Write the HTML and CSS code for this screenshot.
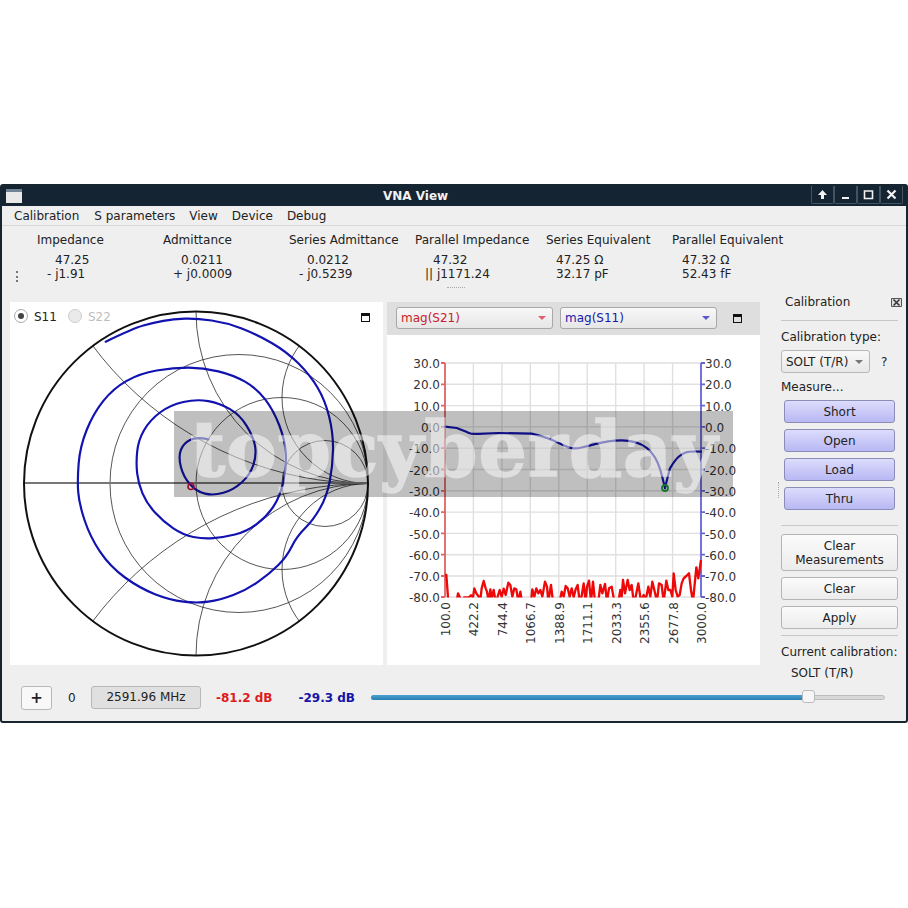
FILE: index.html
```html
<!DOCTYPE html>
<html lang="en">
<head>
<meta charset="utf-8">
<title>VNA View</title>
<link rel="stylesheet" href="styles.css">
</head>
<body>
<div class="window">
  <div class="titlebar">
    <div class="app-icon"></div>
    <div class="title">VNA View</div>
    <div class="wm-buttons">
      <div class="wm-btn"><svg width="11" height="11" viewBox="0 0 11 11"><path class="wm-fill" d="M5.5 1 10 6H7v4H4V6H1z"/></svg></div>
      <div class="wm-btn"><svg width="11" height="11" viewBox="0 0 11 11"><rect class="wm-fill" x="2" y="8" width="7" height="2"/></svg></div>
      <div class="wm-btn"><svg width="11" height="11" viewBox="0 0 11 11"><path class="wm-line" d="M1.5 2h8v7.5h-8z"/></svg></div>
      <div class="wm-btn"><svg width="11" height="11" viewBox="0 0 11 11"><path class="wm-x" d="M1.5 1.5l8 8M9.5 1.5l-8 8"/></svg></div>
    </div>
  </div>
  <div class="menubar">
    <span>Calibration</span><span>S parameters</span><span>View</span><span>Device</span><span>Debug</span>
  </div>
  <div class="info">
    <div class="grip-v"></div>
    <div class="col c1"><div class="lbl">Impedance</div><div class="re">47.25</div><div class="im">- j1.91</div></div>
    <div class="col c1"><div class="lbl">Admittance</div><div class="re">0.0211</div><div class="im">+ j0.0009</div></div>
    <div class="col c1"><div class="lbl">Series Admittance</div><div class="re">0.0212</div><div class="im">- j0.5239</div></div>
    <div class="col c2"><div class="lbl">Parallel Impedance</div><div class="re">47.32</div><div class="im">|| j1171.24</div></div>
    <div class="col c1"><div class="lbl">Series Equivalent</div><div class="im">47.25 Ω</div><div class="im">32.17 pF</div></div>
    <div class="col"><div class="lbl">Parallel Equivalent</div><div class="im">47.32 Ω</div><div class="im">52.43 fF</div></div>
    <div class="grip-h"></div>
  </div>
  <div class="workspace">
    <div class="left">
      <div class="charts">
        <div class="panel smith">
          <div class="legend">
            <span class="radio on"></span><span class="leg-text">S11</span>
            <span class="radio off"></span><span class="leg-text dim">S22</span>
          </div>
          <div class="max-icon smith-max"></div>
          <svg class="chart" width="373" height="363" viewBox="10 302 373 363">
            <defs><clipPath id="sc"><circle cx="196" cy="483.5" r="172"/></clipPath></defs>
            <g clip-path="url(#sc)" class="grid-smith">
              <circle cx="239" cy="483.5" r="129"/>
              <circle cx="282" cy="483.5" r="86"/>
              <circle cx="325" cy="483.5" r="43"/>
              <circle cx="368" cy="139.5" r="344"/>
              <circle cx="368" cy="827.5" r="344"/>
              <circle cx="368" cy="311.5" r="172"/>
              <circle cx="368" cy="655.5" r="172"/>
              <circle cx="368" cy="397.5" r="86"/>
              <circle cx="368" cy="569.5" r="86"/>
            </g>
            <line class="smith-axis" x1="24" y1="483" x2="368" y2="483"/>
            <circle class="smith-outer" cx="196" cy="483.5" r="172"/>
            <g transform="translate(0 300) scale(.33333)">
              <path class="trace-smith" d="M317 125Q400 85 430 76.5Q460 68 490 62.5Q520 57 555 56Q590 55 635 61.5Q680 68 725 85.5Q770 103 815 129Q860 155 895 190Q930 225 952.5 262.5Q975 300 987.5 350Q1000 400 999 450Q998 500 989 545Q980 590 960 625Q940 660 915 685Q890 710 875 740Q860 770 835 795Q810 820 775 845Q740 870 700 885Q660 900 625 905Q590 910 550 905Q510 900 465 882.5Q420 865 375 832.5Q330 800 300 755Q270 710 253.5 660Q237 610 234.5 575Q232 540 236 490Q240 440 260 390Q280 340 310 302.5Q340 265 380 242.5Q420 220 470 211.5Q520 203 565 203Q610 203 655 214Q700 225 735 245Q770 265 795 297.5Q820 330 837.5 375Q855 420 857.5 460Q860 500 850 545Q840 590 820 620Q800 650 770 672.5Q740 695 705 703.5Q670 712 640 714.5Q610 717 580 711Q550 705 520 685Q490 665 465 637.5Q440 610 427.5 580Q415 550 411.5 520Q408 490 411.5 455Q415 420 432.5 390Q450 360 480 337.5Q510 315 550 306Q590 297 625 303.5Q660 310 690 327.5Q720 345 740 377.5Q760 410 765 437.5Q770 465 760 495Q750 525 725 547.5Q700 570 670 578.5Q640 587 615 581Q590 575 570 552.5Q550 530 542.5 500Q535 470 542.5 450Q550 430 570 420Q590 410 625 418"/>
            </g>
            <circle class="mark-red" cx="191" cy="486.5" r="3"/>
          </svg>
        </div>
        <div class="panel plot">
          <div class="plot-head">
            <div class="combo red-c"><span>mag(S21)</span><i class="tri tri-red"></i></div>
            <div class="combo blue-c"><span>mag(S11)</span><i class="tri tri-blue"></i></div>
            <div class="max-icon"></div>
          </div>
          <svg class="chart" width="373" height="330" viewBox="387 335 373 330">
            <defs><clipPath id="pc"><rect x="445" y="360" width="258" height="237.5"/></clipPath></defs>
            <path class="grid-plot" d="M445 363H701M445 384.3H701M445 405.6H701M445 426.9H701M445 448.2H701M445 469.5H701M445 490.8H701M445 512.1H701M445 533.4H701M445 554.7H701M445 576H701M445 597H701M473.4 363V597M501.9 363V597M530.3 363V597M558.8 363V597M587.2 363V597M615.7 363V597M644.1 363V597M672.6 363V597"/>
            <path class="axis-red" d="M445 363V597M441 363h4M441 384.3h4M441 405.6h4M441 426.9h4M441 448.2h4M441 469.5h4M441 490.8h4M441 512.1h4M441 533.4h4M441 554.7h4M441 576h4M441 597h4"/>
            <path class="axis-blue" d="M701 363V597M701 363h4M701 384.3h4M701 405.6h4M701 426.9h4M701 448.2h4M701 469.5h4M701 490.8h4M701 512.1h4M701 533.4h4M701 554.7h4M701 576h4M701 597h4"/>
            <g class="ylab-l">
              <text x="440" y="368">30.0</text><text x="440" y="389">20.0</text><text x="440" y="411">10.0</text><text x="440" y="432">0.0</text><text x="440" y="453">-10.0</text><text x="440" y="475">-20.0</text><text x="440" y="496">-30.0</text><text x="440" y="517">-40.0</text><text x="440" y="539">-50.0</text><text x="440" y="560">-60.0</text><text x="440" y="581">-70.0</text><text x="440" y="602">-80.0</text>
            </g>
            <g class="ylab-r">
              <text x="705" y="368">30.0</text><text x="705" y="389">20.0</text><text x="705" y="411">10.0</text><text x="705" y="432">0.0</text><text x="705" y="453">-10.0</text><text x="705" y="475">-20.0</text><text x="705" y="496">-30.0</text><text x="705" y="517">-40.0</text><text x="705" y="539">-50.0</text><text x="705" y="560">-60.0</text><text x="705" y="581">-70.0</text><text x="705" y="602">-80.0</text>
            </g>
            <g class="xlab">
              <text transform="translate(449.5 602) rotate(-90)">100.0</text>
              <text transform="translate(478 602) rotate(-90)">422.2</text>
              <text transform="translate(506.5 602) rotate(-90)">744.4</text>
              <text transform="translate(535 602) rotate(-90)">1066.7</text>
              <text transform="translate(563.5 602) rotate(-90)">1388.9</text>
              <text transform="translate(592 602) rotate(-90)">1711.1</text>
              <text transform="translate(620.5 602) rotate(-90)">2033.3</text>
              <text transform="translate(649 602) rotate(-90)">2355.6</text>
              <text transform="translate(677.5 602) rotate(-90)">2677.8</text>
              <text transform="translate(706 602) rotate(-90)">3000.0</text>
            </g>
            <g clip-path="url(#pc)">
              <g transform="translate(385 490) scale(.33333)">
                <polyline class="trace-red" points="180,255 184,255 190,335 215,335 219,310 224,320 228,335 238,322 252,322 258,316 264,322 268,295 274,310 280,318 286,330 290,295 296,273 302,295 306,305 311,335 316,298 320,325 326,300 332,335 338,320 344,300 350,320 356,296 362,315 370,278 376,285 382,320 388,295 394,298 400,335 406,305 411,335 438,335 442,298 448,320 454,295 460,310 466,300 472,320 480,275 486,290 490,335 498,285 504,335 524,335 530,305 536,320 542,288 548,295 554,320 560,295 566,322 572,298 578,285 584,335 590,318 596,280 602,335 606,290 612,272 618,335 624,275 630,335 640,335 646,285 652,310 660,282 666,335 672,295 680,290 688,335 700,335 706,300 710,320 714,270 720,310 728,270 734,300 740,285 746,335 752,320 760,280 768,335 776,315 782,330 790,290 796,320 802,275 808,300 816,335 822,280 830,285 836,335 844,272 850,300 856,300 862,320 866,250 872,300 878,320 884,315 890,280 896,265 904,258 912,250 918,300 924,335 934,232 940,265 948,210"/>
              </g>
            </g>
            <g transform="translate(385 300) scale(.33333)">
              <path class="trace-blue" d="M180 380L215 384Q240 393 250 398Q260 403 280 401.5L340 399 440 401Q470 408 490 415.5Q510 423 527.5 432Q545 441 557.5 444Q570 447 590 442.5Q610 438 630 432.5Q650 427 670 424Q690 421 710 421Q730 421 750 426.5Q770 432 785 443.5Q800 455 810 472.5Q820 490 826 510Q832 530 840 565Q848 530 855 505Q870 480 880 471Q890 462 902 457.5Q915 453 948 455"/>
            </g>
            <circle class="mark-green" cx="665" cy="488" r="3"/>
          </svg>
        </div>
      </div>
      <div class="bottom">
        <button class="plus">+</button>
        <span class="zero">0</span>
        <div class="freq">2591.96 MHz</div>
        <span class="db red-t">-81.2 dB</span>
        <span class="db blue-t">-29.3 dB</span>
        <div class="slider"><div class="slider-fill"></div><div class="slider-handle"></div></div>
      </div>
    </div>
    <div class="grip-side"></div>
    <div class="sidebar">
      <div class="side-head"><span>Calibration</span>
        <svg class="side-close" width="11" height="11" viewBox="0 0 11 11"><path class="close-box" d="M.5 1.5h10v8h-10z"/><path class="close-x" d="M2.5 2.5l6 6M8.5 2.5l-6 6"/></svg>
      </div>
      <hr class="rule">
      <div class="s-label first">Calibration type:</div>
      <div class="type-row">
        <div class="type-combo"><span>SOLT (T/R)</span><i class="tri tri-gray"></i></div>
        <span class="q">?</span>
      </div>
      <div class="s-label">Measure...</div>
      <div class="measure">
        <button class="btn purple">Short</button>
        <button class="btn purple">Open</button>
        <button class="btn purple">Load</button>
        <button class="btn purple">Thru</button>
      </div>
      <hr class="rule r2">
      <button class="btn plain tall">Clear<br>Measurements</button>
      <button class="btn plain">Clear</button>
      <button class="btn plain">Apply</button>
      <hr class="rule r3">
      <div class="s-label cur">Current calibration:</div>
      <div class="s-label curval">SOLT (T/R)</div>
    </div>
  </div>
</div>
<div class="watermark"><span>topcyberday</span></div>
</body>
</html>
```
FILE: styles.css
```css
html, body { margin: 0; padding: 0; background: #fff; }
body { position: relative; width: 908px; height: 908px; overflow: hidden; font-family: "DejaVu Sans", sans-serif; font-size: 12px; color: #2a2a2a; }
.window { box-sizing: border-box; width: 908px; height: 539px; margin-top: 184px; border: 2px solid #16252f; border-radius: 3px; background: #efefef; display: flex; flex-direction: column; }
.titlebar { height: 20px; background: #152433; display: flex; align-items: center; position: relative; flex: none; }
.app-icon { width: 16px; height: 14px; margin-left: 4px; background: linear-gradient(#6f8296 0 3px, #e8e8e8 3px); }
.title { position: absolute; left: 381px; top: 3px; color: #f2f2f2; font-weight: 700; font-size: 12px; line-height: 15px; }
.wm-buttons { margin-left: auto; margin-right: 3px; display: flex; height: 18px; align-self: flex-start; }
.wm-btn { width: 23px; box-sizing: border-box; border: 1px solid #43535f; border-top: 0; border-radius: 0 0 2px 2px; display: flex; align-items: center; justify-content: center; }
.wm-fill { fill: #f2f2f2; }
.wm-line { fill: none; stroke: #f2f2f2; stroke-width: 1.6; }
.wm-x { fill: none; stroke: #f2f2f2; stroke-width: 2.2; }
.menubar { height: 20px; flex: none; box-sizing: border-box; border-bottom: 1px solid #d8d8d8; display: flex; gap: 14px; padding-left: 12px; align-items: center; line-height: 18px; color: #222; }
.menubar span:first-child { margin-right: 1px; }
.info { height: 69px; flex: none; position: relative; display: flex; padding-left: 35px; padding-top: 7px; box-sizing: border-box; }
.col { line-height: 14px; color: #222; }
.c1 { width: 126px; }
.c2 { width: 131px; }
.lbl { margin-bottom: 6px; }
.re { padding-left: 18px; }
.im { padding-left: 10px; }
.grip-v { position: absolute; left: 14px; top: 45px; width: 0; height: 11px; border-left: 2px dotted #777; }
.grip-h { position: absolute; left: 445px; top: 61px; width: 18px; border-top: 1px dotted #aaa; }
.workspace { flex: 1; display: flex; min-height: 0; }
.left { width: 758px; margin-left: 8px; flex: none; display: flex; flex-direction: column; }
.charts { display: flex; gap: 4px; height: 363px; margin-top: 7px; flex: none; }
.panel { width: 373px; height: 363px; background: #fff; position: relative; }
.chart { display: block; }
.legend { position: absolute; left: 4px; top: 7px; display: flex; align-items: center; height: 14px; z-index: 1; }
.radio { width: 14px; height: 14px; box-sizing: border-box; border: 1px solid #aaa; border-radius: 50%; background: #fff; position: relative; }
.radio.on::after { content: ""; position: absolute; left: 3px; top: 3px; width: 6px; height: 6px; border-radius: 50%; background: #444; }
.radio.off { background: #eaeaea; border-color: #ccc; margin-left: 11px; }
.leg-text { margin-left: 6px; padding-top: 1px; color: #222; }
.leg-text.dim { color: #bdbdbd; }
.max-icon { width: 9px; height: 9px; box-sizing: border-box; border: 1px solid #111; border-top-width: 3px; flex: none; }
.smith-max { position: absolute; left: 351px; top: 11px; }
.grid-smith circle { fill: none; stroke: #2a2a2a; stroke-width: .8; }
.smith-axis { stroke: #777; stroke-width: 2; }
.smith-outer { fill: none; stroke: #111; stroke-width: 2; }
.trace-smith { fill: none; stroke: #1212b0; stroke-width: 6.5; stroke-linejoin: round; stroke-linecap: round; }
.mark-red { fill: none; stroke: #d8103a; stroke-width: 1.6; }
.mark-green { fill: none; stroke: #1ea03c; stroke-width: 1.8; }
.plot-head { height: 33px; background: #dedede; display: flex; align-items: center; box-sizing: border-box; padding: 0 0 2px 9px; gap: 7px; }
.plot-head .max-icon { margin-left: 9px; margin-top: 2px; }
.combo { width: 157px; height: 22px; box-sizing: border-box; border: 1px solid #a8a8a8; border-radius: 3px; background: linear-gradient(#f8f8f8, #e6e6e6); display: flex; align-items: center; padding: 0 5px 0 4px; justify-content: space-between; }
.red-c { color: #c8202a; }
.blue-c { color: #1a1aa8; }
.tri { display: block; width: 0; height: 0; border-left: 4px solid transparent; border-right: 4px solid transparent; border-top: 4px solid #888; margin-right: 1px; }
.tri-red { border-top-color: #e06070; }
.tri-blue { border-top-color: #5a5ad0; }
.tri-gray { border-top-color: #777; }
.grid-plot { fill: none; stroke: #e0e0e0; stroke-width: 1.4; }
.axis-red { fill: none; stroke: #e06464; stroke-width: 1.8; }
.axis-blue { fill: none; stroke: #6464d8; stroke-width: 1.8; }
.ylab-l text, .ylab-r text, .xlab text { font-family: "DejaVu Sans", sans-serif; font-size: 12px; fill: #333; }
.ylab-l text { text-anchor: end; }
.xlab text { text-anchor: end; }
.trace-red { fill: none; stroke: #ee0808; stroke-width: 7; stroke-linejoin: round; }
.trace-blue { fill: none; stroke: #1414b0; stroke-width: 6.5; stroke-linejoin: round; stroke-linecap: round; }
.bottom { display: flex; align-items: center; height: 25px; margin-top: 20px; padding-left: 11px; flex: none; white-space: nowrap; }
.bottom > * { flex: none; }
.plus { width: 31px; height: 24px; box-sizing: border-box; padding: 0; border: 1px solid #b8b8b8; border-radius: 3px; background: #f8f8f8; font: 700 15px "DejaVu Sans", sans-serif; color: #222; }
.zero { margin-left: 16px; width: 7px; color: #222; }
.freq { width: 110px; height: 23px; margin-left: 16px; box-sizing: border-box; border: 1px solid #b8b8b8; border-radius: 3px; background: #e0e0e0; text-align: center; line-height: 21px; color: #222; }
.db { font-weight: 700; }
.red-t { color: #dc1c1c; margin-left: 15px; }
.blue-t { color: #1414a8; margin-left: 26px; }
.slider { position: relative; width: 514px; height: 5px; margin-left: 16px; box-sizing: border-box; border: 1px solid #bdbdbd; border-radius: 3px; background: #d8d8d8; }
.slider-fill { width: 437px; height: 5px; margin: -1px 0 0 -1px; border-radius: 3px; background: linear-gradient(#4aa0d0, #2b7fb4); border: 0; }
.slider-handle { position: absolute; left: 430px; top: -6px; width: 13px; height: 13px; box-sizing: border-box; border: 1px solid #bbb; border-radius: 3px; background: #f6f6f6; }
.grip-side { width: 0; height: 16px; margin: 187px 0 0 10px; border-left: 1px dotted #aaa; flex: none; }
.sidebar { width: 117px; margin-left: 2px; flex: none; color: #222; }
.side-head { display: flex; justify-content: space-between; align-items: center; height: 14px; margin: 0 -4px 11px 4px; }
.side-close { display: block; }
.close-box { fill: #ddd; stroke: #555; stroke-width: 1; }
.close-x { fill: none; stroke: #333; stroke-width: 1.5; }
.rule { margin: 0; border: 0; border-top: 1px solid #c8c8c8; height: 0; }
.r2 { margin-top: 15px; }
.r3 { margin-top: 6px; }
.s-label { line-height: 14px; }
.first { margin-top: 9px; }
.type-row { display: flex; align-items: center; margin: 6px 0 7px; }
.type-combo { width: 89px; height: 23px; box-sizing: border-box; border: 1px solid #b8b8b8; border-radius: 3px; background: linear-gradient(#f8f8f8, #e8e8e8); display: flex; align-items: center; justify-content: space-between; padding: 0 5px 0 4px; }
.q { margin-left: 11px; }
.measure { display: flex; flex-direction: column; gap: 6px; padding: 6px 3px 0; }
.btn { display: block; width: 100%; height: 23px; box-sizing: border-box; padding: 0; border: 1px solid #b4b4b4; border-radius: 3px; font: 12px/14px "DejaVu Sans", sans-serif; color: #222; background: linear-gradient(#fbfbfb, #ececec); margin-top: 6px; }
.purple { margin-top: 0; background: linear-gradient(#dcdcfc, #b8b8f4); border-color: #8c8cb8; }
.tall { height: 37px; margin-top: 8px; }
.cur { margin-top: 9px; }
.curval { margin: 7px 0 0 10px; }
.watermark { position: absolute; left: 174px; top: 411px; width: 559px; height: 86px; background: rgba(0, 0, 0, .25); overflow: hidden; }
.watermark span { display: block; font: 700 76px/76px "DejaVu Serif", serif; letter-spacing: 1px; color: #fff; -webkit-text-stroke: 1.6px #fff; opacity: .5; padding-left: 16px; margin-top: 1px; white-space: nowrap; }
```
